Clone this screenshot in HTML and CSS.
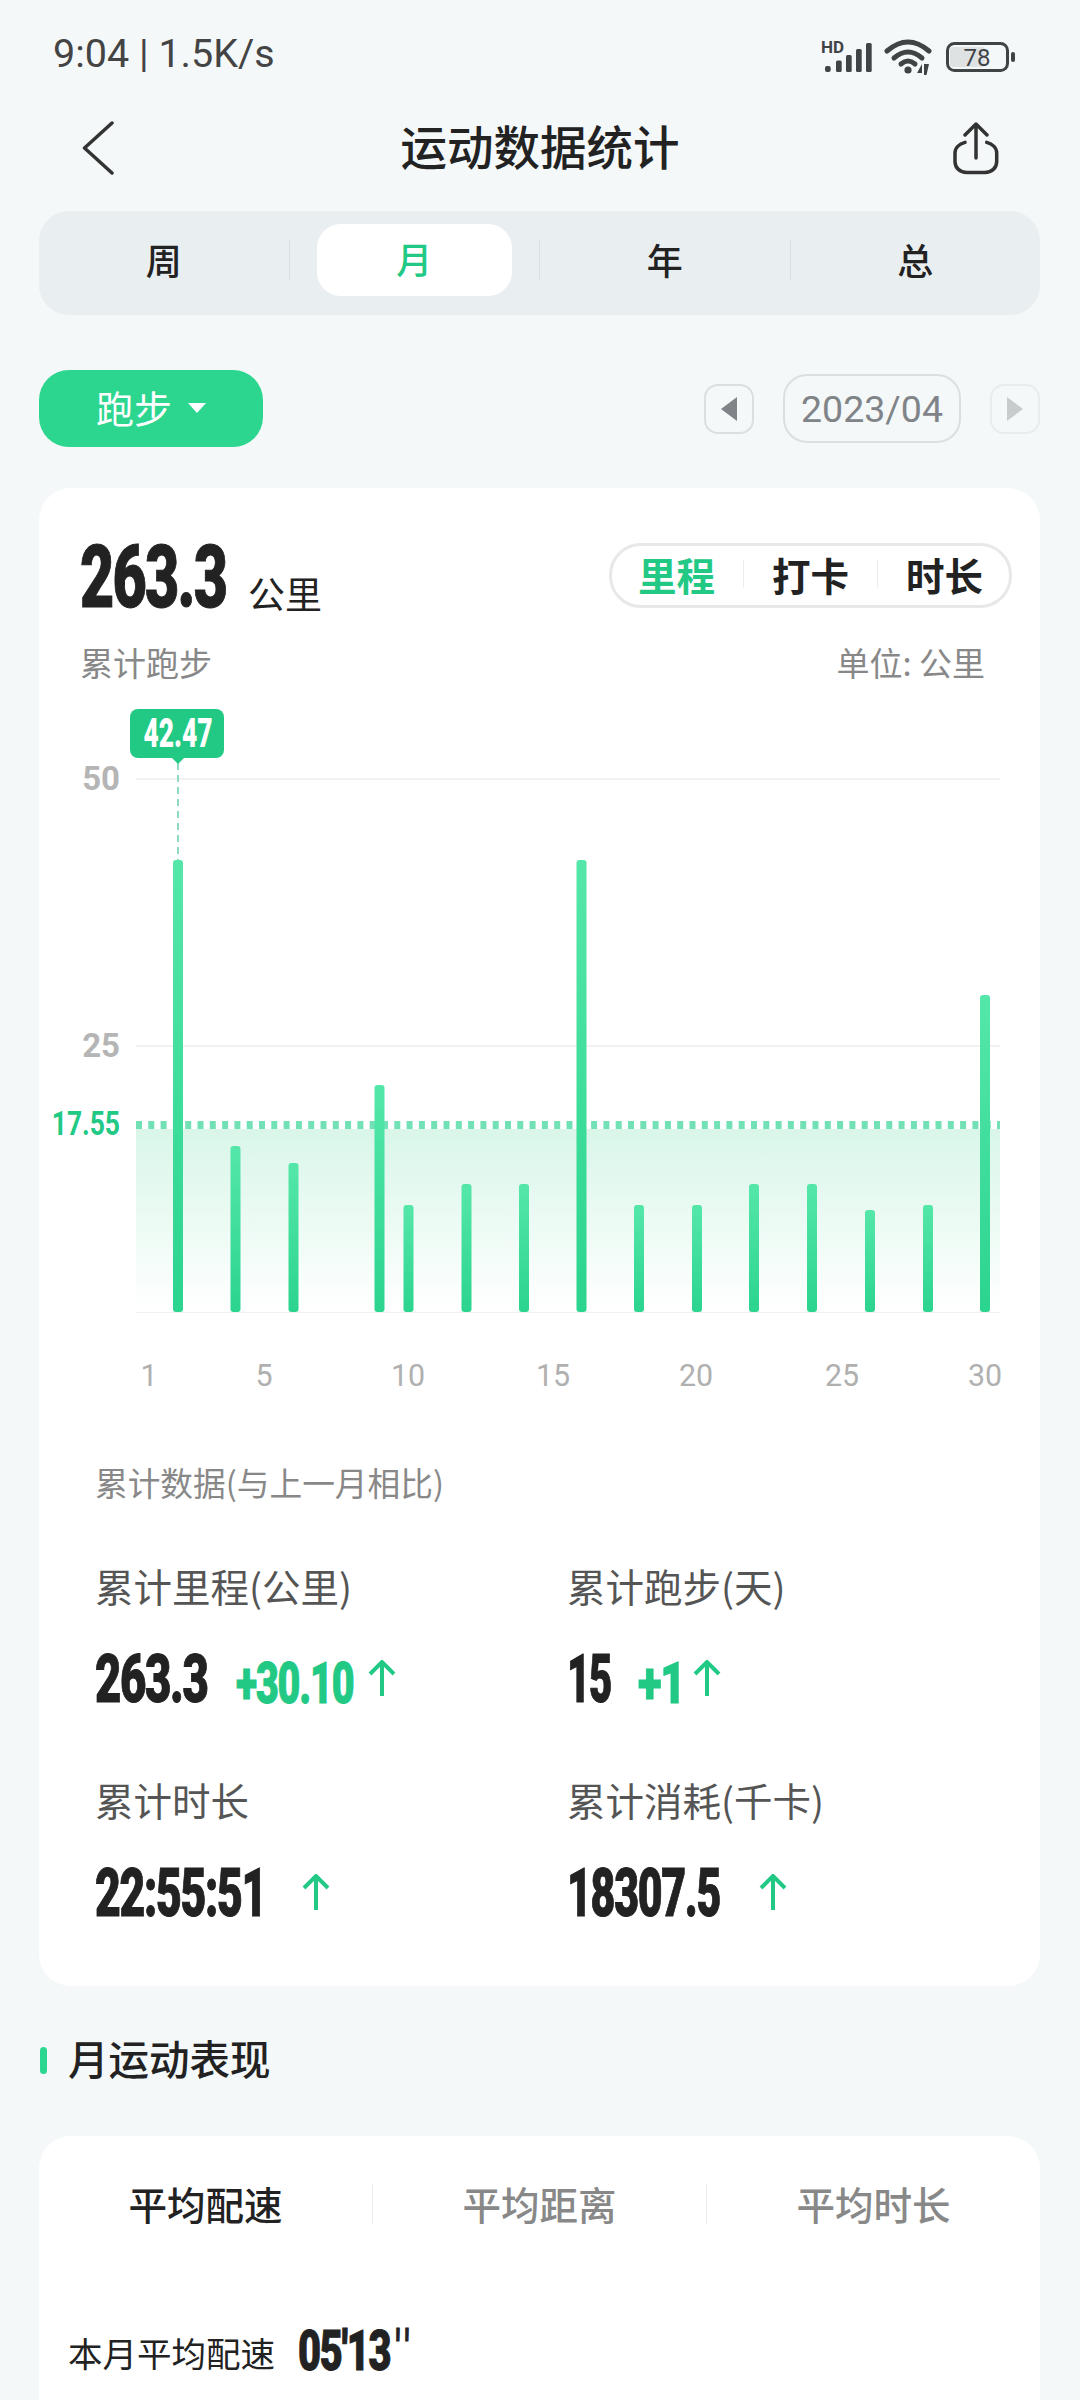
FILE: index.html
```html
<!DOCTYPE html>
<html lang="zh-CN">
<head>
<meta charset="utf-8">
<title>运动数据统计</title>
<link rel="stylesheet" href="styles.css">
</head>
<body>
<header class="status">
  <span class="status-text">9:04 | 1.5K/s</span>
  <div class="status-icons">
    <svg class="ic-signal" viewBox="820 30 56 42" width="56" height="42">
      <text x="821" y="50" class="hd">HD</text>
      <rect x="825" y="63" width="5.7" height="6" rx="2"/><rect x="836" y="57.5" width="5.7" height="11.5" rx="1.5"/><rect x="846" y="52" width="5.7" height="17" rx="1.5"/><rect x="856" y="46" width="5.7" height="23" rx="1.5"/><rect x="866" y="40" width="5.7" height="29" rx="1.5"/>
    </svg>
    <svg class="ic-wifi" viewBox="883 30 50 42" width="50" height="42">
      <g fill="none" stroke="#3f4447" stroke-width="5" stroke-linecap="round">
        <path d="M887 48Q908 30 929 48"/><path d="M894 55Q908 43 922 55"/><path d="M901 61Q908 55 915 61"/>
      </g>
      <circle cx="908" cy="67" r="3.6" fill="#3f4447"/>
      <path d="M917 70h5v-9zM924 61h5l-2.500 11h-2.500z" fill="#3f4447"/>
    </svg>
    <svg class="ic-batt" viewBox="945 30 72 42" width="72" height="42">
      <rect x="950" y="44" width="35" height="20" rx="3" fill="#dfe2e3"/>
      <rect x="947.500" y="40.500" width="60" height="27" rx="7" fill="none" stroke="#3f4447" stroke-width="3"/>
      <rect x="1011" y="49" width="4" height="10" rx="2" fill="#3f4447"/>
      <text x="977" y="63" class="batt-num">78</text>
    </svg>
  </div>
</header>

<nav class="nav">
  <svg class="ic-back" viewBox="82 121 32 54" width="32" height="54"><path d="M112 123L84.500 148L112 173" fill="none" stroke="#333" stroke-width="3.500" stroke-linecap="round" stroke-linejoin="round"/></svg>
  <h1 class="title">运动数据统计</h1>
  <svg class="ic-share" viewBox="-2 -1 46 53" width="46" height="53"><g fill="none" stroke="#333" stroke-width="3.500" stroke-linecap="round" stroke-linejoin="round"><path d="M21 1V35M10 12L21 1L32 12"/><path d="M10 19.400C4 21 0 25 0 30V38.400C0 45 5 49.400 11.700 49.400H30C36.700 49.400 41.700 45 41.700 38.400V30C41.700 25 37.700 21 31.700 19.400"/></g></svg>
</nav>

<section class="period">
  <div class="period-cell">周</div>
  <i class="period-sep"></i>
  <div class="period-cell"><span class="period-on">月</span></div>
  <i class="period-sep"></i>
  <div class="period-cell">年</div>
  <i class="period-sep"></i>
  <div class="period-cell">总</div>
</section>

<section class="filter">
  <button class="sport"><span class="sport-text">跑步</span><svg class="caret" viewBox="0 0 18 10" width="18" height="10"><path d="M0 0H18L9 10Z" fill="#fff"/></svg></button>
  <div class="date-nav">
    <span class="date-btn"><svg viewBox="0 0 16 24" width="16" height="24"><path d="M16 0V24L0 12Z" fill="#808488"/></svg></span>
    <span class="date">2023/04</span>
    <span class="date-btn date-btn-off"><svg viewBox="0 0 16 24" width="16" height="24"><path d="M0 0V24L16 12Z" fill="#c9cccd"/></svg></span>
  </div>
</section>

<main class="card card-main">
  <div class="head">
    <div class="total"><b class="num num-total">263.3</b><span class="total-unit">公里</span></div>
    <div class="metric">
      <span class="metric-on">里程</span><i class="metric-sep"></i><span>打卡</span><i class="metric-sep"></i><span>时长</span>
    </div>
  </div>
  <div class="sub"><span>累计跑步</span><span>单位: 公里</span></div>

  <svg class="chart" viewBox="39 690 1001 710" width="1001" height="710">
    <defs>
      <linearGradient id="area" x1="0" y1="0" x2="0" y2="1"><stop offset="0" stop-color="#d9f6e9"/><stop offset="1" stop-color="#ffffff"/></linearGradient>
      <linearGradient id="bar" x1="0" y1="0" x2="0" y2="1"><stop offset="0" stop-color="#55e7aa"/><stop offset="1" stop-color="#2bd48f"/></linearGradient>
    </defs>
    <g class="grid"><path d="M136 779H1000"/><path d="M136 1046H1000"/><path d="M136 1312H1000"/></g>
    <rect x="136" y="1129" width="864" height="183" fill="url(#area)"/>
    <path d="M136 1125H1000" stroke="#72e2b6" stroke-width="8" stroke-dasharray="6 6.300"/>
    <path d="M178 763V860" stroke="#8fd8c4" stroke-width="2" stroke-dasharray="7 5"/>
    <g fill="url(#bar)">
      <rect x="173" y="860" width="10" height="452" rx="3"/>
      <rect x="230.500" y="1146" width="10" height="166" rx="3"/>
      <rect x="288.500" y="1163" width="10" height="149" rx="3"/>
      <rect x="374.500" y="1085" width="10" height="227" rx="3"/>
      <rect x="403.500" y="1205" width="10" height="107" rx="3"/>
      <rect x="461.500" y="1184" width="10" height="128" rx="3"/>
      <rect x="519" y="1184" width="10" height="128" rx="3"/>
      <rect x="576.500" y="860" width="10" height="452" rx="3"/>
      <rect x="634" y="1205" width="10" height="107" rx="3"/>
      <rect x="692" y="1205" width="10" height="107" rx="3"/>
      <rect x="749" y="1184" width="10" height="128" rx="3"/>
      <rect x="807" y="1184" width="10" height="128" rx="3"/>
      <rect x="865" y="1210" width="10" height="102" rx="3"/>
      <rect x="923" y="1205" width="10" height="107" rx="3"/>
      <rect x="980" y="995" width="10" height="317" rx="3"/>
    </g>
    <text x="120" y="790" class="y-label">50</text>
    <text x="120" y="1057" class="y-label">25</text>
    <text transform="translate(120 1135) scale(.8 1)" class="y-label y-avg">17.55</text>
    <rect x="130" y="709" width="94" height="49" rx="8" fill="#22c985"/>
    <path d="M171 757H185L178 764Z" fill="#22c985"/>
    <text transform="translate(178 747) scale(.66 1)" class="tip">42.47</text>
    <g class="x-labels">
      <text transform="translate(149 1386) scale(.95 1)">1</text>
      <text transform="translate(264 1386) scale(.95 1)">5</text>
      <text transform="translate(408 1386) scale(.95 1)">10</text>
      <text transform="translate(553 1386) scale(.95 1)">15</text>
      <text transform="translate(696 1386) scale(.95 1)">20</text>
      <text transform="translate(842 1386) scale(.95 1)">25</text>
      <text transform="translate(985 1386) scale(.95 1)">30</text>
    </g>
  </svg>

  <div class="stats-title">累计数据(与上一月相比)</div>
  <div class="stats">
    <div class="stat">
      <div class="stat-label">累计里程(公里)</div>
      <div class="stat-row">
        <b class="num num-stat w-263">263.3</b>
        <b class="num num-delta w-3010">+30.10</b>
        <svg class="arrow" viewBox="0 0 28 38" width="28" height="38"><path d="M14 36V2M2 14L14 2L26 14" fill="none" stroke="#22c985" stroke-width="4"/></svg>
      </div>
    </div>
    <div class="stat">
      <div class="stat-label">累计跑步(天)</div>
      <div class="stat-row">
        <b class="num num-stat w-15">15</b>
        <b class="num num-delta w-1">+1</b>
        <svg class="arrow" viewBox="0 0 28 38" width="28" height="38"><path d="M14 36V2M2 14L14 2L26 14" fill="none" stroke="#22c985" stroke-width="4"/></svg>
      </div>
    </div>
    <div class="stat">
      <div class="stat-label">累计时长</div>
      <div class="stat-row">
        <b class="num num-stat w-225">22:55:51</b>
        <svg class="arrow" viewBox="0 0 28 38" width="28" height="38"><path d="M14 36V2M2 14L14 2L26 14" fill="none" stroke="#22c985" stroke-width="4"/></svg>
      </div>
    </div>
    <div class="stat">
      <div class="stat-label">累计消耗(千卡)</div>
      <div class="stat-row">
        <b class="num num-stat w-183">18307.5</b>
        <svg class="arrow" viewBox="0 0 28 38" width="28" height="38"><path d="M14 36V2M2 14L14 2L26 14" fill="none" stroke="#22c985" stroke-width="4"/></svg>
      </div>
    </div>
  </div>
</main>

<h2 class="section"><i class="section-bar"></i>月运动表现</h2>

<section class="card card-perf">
  <div class="perf-tabs">
    <span class="perf-tab perf-on">平均配速</span><i class="perf-sep"></i>
    <span class="perf-tab">平均距离</span><i class="perf-sep"></i>
    <span class="perf-tab">平均时长</span>
  </div>
  <div class="perf-row">
    <span class="perf-label">本月平均配速</span>
    <b class="num num-pace">05'13<span class="pace-sec">''</span></b>
  </div>
</section>
</body>
</html>
```

FILE: styles.css
```css
* { box-sizing: border-box; }
html, body { margin: 0; padding: 0; height: 2400px; overflow: hidden; }
body {
  width: 1080px;
  background: #f4f8f8;
  color: #222;
  font-family: "Noto Sans CJK SC", "Noto Sans", sans-serif;
}
i { display: block; font-style: normal; }

.status { height: 108px; display: flex; align-items: center; justify-content: space-between; padding: 0 63px 0 53px; }
.status-text { font: 400 39.5px/1.2 Roboto, sans-serif; color: #444; }
.status-icons { display: flex; align-items: center; gap: 7px; }
.ic-signal rect { fill: #3f4447; }
.hd { font: 700 17px/1 Roboto, sans-serif; fill: #3f4447; }
.ic-batt { margin-left: 5px; }
.batt-num { font: 400 24px Roboto, sans-serif; fill: #3f4447; text-anchor: middle; }

.nav { height: 80px; display: flex; align-items: center; justify-content: space-between; padding: 0 81px 0 82px; }
.nav svg { flex: none; }
.title { margin: 0 0 0 13px; padding-bottom: 6px; font-size: 46.5px; line-height: 60px; font-weight: 500; color: #222; }

.period { margin: 23px 40px 0 39px; height: 104px; padding-bottom: 6px; background: #e9eef1; border-radius: 30px; display: flex; align-items: center; }
.period-cell { flex: 1; display: flex; justify-content: center; align-items: center; padding-bottom: 2px; font-size: 36px; line-height: 50px; font-weight: 500; color: #222; height: 72px; }
.period-on { width: 195px; height: 72px; margin-bottom: -2px; line-height: 69px; text-align: center; background: #fff; border-radius: 24px; color: #22c985; }
.period-sep { width: 1px; height: 40px; background: #d9e0e2; }

.filter { margin: 55px 40px 0 39px; display: flex; justify-content: space-between; align-items: center; }
.sport { width: 224px; height: 77px; border: 0; padding: 0; background: #2cd68f; border-radius: 30px; color: #fff; font: 400 38px "Noto Sans CJK SC", sans-serif; display: flex; align-items: center; justify-content: center; gap: 16px; }
.sport-text { padding-bottom: 4px; }
.caret { margin-top: -2px; }
.date-nav { display: flex; align-items: center; gap: 29px; }
.date-btn { width: 50px; height: 50px; border: 2px solid #dcdfe0; border-radius: 14px; display: flex; align-items: center; justify-content: center; }
.date-btn-off { border-color: #e9ecec; }
.date { width: 178px; height: 69px; border: 2px solid #dcdfe0; border-radius: 24px; display: flex; align-items: center; justify-content: center; font: 400 37.5px Roboto, sans-serif; color: #808488; }

.card { background: #fff; border-radius: 32px; margin: 0 40px 0 39px; }
.card-main { margin-top: 41px; height: 1498px; padding-top: 55px; }

.num { display: block; font-family: Roboto, sans-serif; font-weight: 900; white-space: nowrap; transform-origin: left center; color: #222; letter-spacing: -.03em; -webkit-text-stroke: 1px currentColor; }
.head { display: flex; justify-content: space-between; align-items: flex-start; padding: 0 28px 0 41px; height: 65px; }
.total { display: flex; align-items: flex-end; height: 68px; }
.num-total { width: 168px; font-size: 87px; line-height: 68px; transform: scaleX(.68); }
.total-unit { font-size: 37px; line-height: 40px; color: #222; margin-bottom: -2px; }
.metric { width: 403px; height: 65px; border: 3px solid #e8e8e8; border-radius: 32px; display: flex; align-items: center; justify-content: space-between; padding: 0 26px 3px; font-size: 38.5px; font-weight: 700; color: #222; }
.metric-on { color: #22c985; }
.metric-sep { width: 1px; height: 28px; background: #ececec; }

.sub { margin-top: 32px; height: 44px; display: flex; justify-content: space-between; padding: 0 55px 0 41px; font-size: 33px; line-height: 44px; color: #888; }

.chart { display: block; margin-top: 6px; }
.grid path { stroke: #f0f1f1; stroke-width: 2; fill: none; }
.y-label { font: 700 33px Roboto, sans-serif; fill: #b5b5b5; text-anchor: end; }
.y-avg { fill: #22c985; }
.tip { font: 900 40px Roboto, sans-serif; fill: #fff; text-anchor: middle; }
.x-labels text { font: 400 32px Roboto, sans-serif; fill: #b0b0b0; text-anchor: middle; }

.stats-title { margin: 60px 0 0 56px; font-size: 32.7px; line-height: 44px; color: #888; }
.stats { margin: 56px 0 0 56px; display: grid; grid-template-columns: 472px 1fr; row-gap: 65px; }
.stat-label { font-size: 38.5px; line-height: 50px; color: #555; }
.stat-row { margin-top: 39px; height: 60px; display: flex; align-items: center; }
.num-stat { font-size: 67px; line-height: 60px; }
.num-delta { font-size: 58px; line-height: 60px; color: #22c985; margin-top: 7px; }
.w-263 { width: 141px; transform: scaleX(.68); }
.w-15 { width: 71px; transform: scaleX(.60); }
.w-225 { width: 207px; transform: scaleX(.665); }
.w-183 { width: 192px; transform: scaleX(.64); }
.w-3010 { width: 132px; transform: scaleX(.68); }
.w-1 { width: 55px; transform: scaleX(.76); }
.arrow { flex: none; }

.section { margin: 47px 0 0 40px; height: 50px; display: flex; align-items: center; gap: 21px; font-size: 40.5px; line-height: 50px; font-weight: 500; color: #222; }
.section-bar { width: 7px; height: 27px; border-radius: 4px; background: #2cd68f; margin-top: 4px; }

.card-perf { margin-top: 53px; height: 330px; padding-top: 48px; }
.perf-tabs { display: flex; align-items: center; height: 40px; }
.perf-tab { flex: 1; text-align: center; font-size: 38.5px; line-height: 40px; padding-bottom: 3px; font-weight: 500; color: #888; }
.perf-on { color: #222; }
.perf-sep { width: 1px; height: 40px; background: #eceeee; }
.perf-row { margin-top: 101px; padding-left: 29px; height: 60px; display: flex; align-items: center; gap: 23px; }
.perf-label { font-size: 34.5px; line-height: 60px; padding-bottom: 6px; color: #222; }
.num-pace { font-size: 56px; line-height: 60px; transform: scaleX(.71); margin-top: -9px; }
.pace-sec { font-weight: 400; letter-spacing: .1em; margin-left: 6px; }
```
